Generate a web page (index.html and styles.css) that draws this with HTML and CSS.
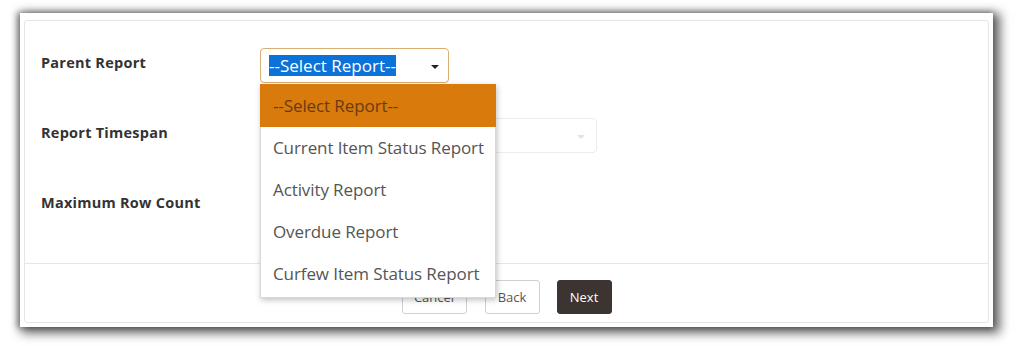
FILE: index.html
```html
<!DOCTYPE html>
<html>
<head>
<meta charset="utf-8">
<link rel="stylesheet" href="styles.css">
</head>
<body>
<div class="stage">
  <div class="frame">
    <div class="panel">
      <div class="form">
        <div class="label">Parent Report</div>
        <div class="field">
          <div class="select focused">
            <span class="sel-text">--Select Report--</span>
            <span class="caret"></span>
          </div>
          <ul class="dropdown">
            <li class="active">--Select Report--</li>
            <li>Current Item Status Report</li>
            <li>Activity Report</li>
            <li>Overdue Report</li>
            <li>Curfew Item Status Report</li>
          </ul>
        </div>
        <div class="label">Report Timespan</div>
        <div class="field">
          <div class="select wide disabled">
            <span class="caret faint"></span>
          </div>
        </div>
        <div class="label">Maximum Row Count</div>
        <div class="field">
          <div class="input"></div>
        </div>
      </div>
      <div class="footer">
        <button class="btn cancel">Cancel</button>
        <button class="btn back">Back</button>
        <button class="btn next">Next</button>
      </div>
    </div>
  </div>
</div>
</body>
</html>
```

FILE: styles.css
```css
html, body {
  margin: 0;
  padding: 0;
  background: #ffffff;
}
body {
  font-family: "Open Sans", "Noto Sans", sans-serif;
  width: 1016px;
  height: 346px;
  overflow: hidden;
}
.stage {
  padding: 13px 23px 19px 20px;
}
.frame {
  width: 973px;
  height: 314px;
  box-sizing: border-box;
  background: #ffffff;
  padding: 7px 4px 4px 4px;
  box-shadow: 4px 3px 10px 3px rgba(0, 0, 0, 0.6), -2px 0 6px 1px rgba(0, 0, 0, 0.35);
}
.panel {
  height: 303px;
  box-sizing: border-box;
  border: 1px solid #e6e6e6;
  border-radius: 3px;
  display: flex;
  flex-direction: column;
}
.form {
  display: grid;
  grid-template-columns: 219px 1fr;
  grid-auto-rows: 35px;
  row-gap: 35px;
  padding: 27px 16px 0 16px;
  height: 242px;
  box-sizing: border-box;
  align-items: center;
}
.label {
  font-weight: 700;
  font-size: 14.5px;
  letter-spacing: 0.25px;
  color: #333333;
  position: relative;
  top: -3px;
}
.field {
  position: relative;
  height: 35px;
}
.select {
  height: 35px;
  box-sizing: border-box;
  width: 189px;
  border: 1px solid #d9ad73;
  border-radius: 4px;
  background: #fff;
  display: flex;
  align-items: center;
  padding-left: 8px;
  position: relative;
}
.select.wide {
  width: 337px;
  border-color: #ececec;
}
.sel-text {
  background: #0a72d8;
  color: #ffffff;
  font-size: 17px;
  line-height: 21px;
  letter-spacing: 0;
}
.caret {
  position: absolute;
  right: 9px;
  top: 16px;
  width: 0;
  height: 0;
  border-left: 4px solid transparent;
  border-right: 4px solid transparent;
  border-top: 4px solid #222;
}
.caret.faint {
  border-top-color: #e3e3e3;
  right: 11px;
}
.input {
  width: 140px;
  height: 35px;
}
.dropdown {
  position: absolute;
  top: 36px;
  left: 0;
  width: 236px;
  margin: 0;
  padding: 0 0 2px 0;
  list-style: none;
  background: #ffffff;
  border: 1px solid #d8d8d8;
  border-top: none;
  box-sizing: border-box;
  box-shadow: 1px 2px 6px rgba(0, 0, 0, 0.25);
  z-index: 10;
}
.dropdown li {
  height: 42px;
  line-height: 42px;
  padding-left: 12px;
  font-size: 17px;
  letter-spacing: -0.1px;
  color: #555555;
  white-space: nowrap;
}
.dropdown li.active {
  background: #d97b0c;
  color: #6a3a12;
  height: 43px;
  line-height: 43px;
  margin: 0 -1px;
  padding-left: 13px;
}
.footer {
  border-top: 1px solid #e6e6e6;
  display: flex;
  justify-content: center;
  align-items: flex-start;
  padding-top: 16px;
  gap: 17px;
  flex: 1;
}
.btn {
  height: 34px;
  box-sizing: border-box;
  border: 1px solid #d0d0d0;
  border-radius: 3px;
  background: #ffffff;
  color: #555555;
  font-family: "Open Sans", "Noto Sans", sans-serif;
  font-size: 13px;
  padding: 0;
}
.cancel { width: 65px; margin-right: 1px; }
.back { width: 55px; }
.next {
  width: 55px;
  background: #3b3431;
  border-color: #3b3431;
  color: #ffffff;
}
```
